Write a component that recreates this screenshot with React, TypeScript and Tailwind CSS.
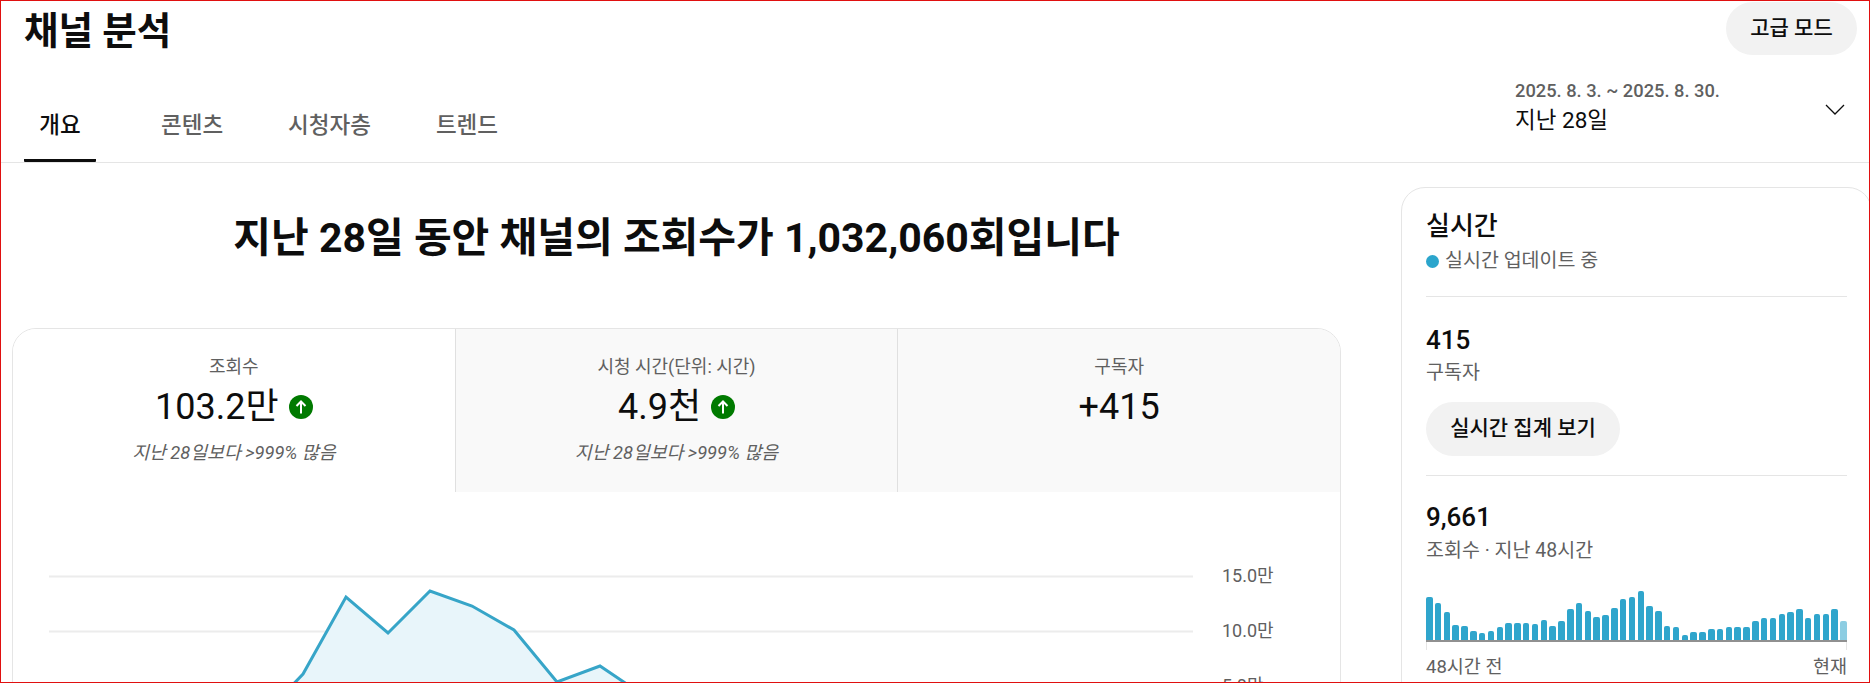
import React from "react";

const font = "[font-family:Roboto,'Noto_Sans_CJK_KR',sans-serif]";

const tabs = ["콘텐츠", "시청자층", "트렌드"];

// bar heights read off the 48 hour chart
const bars: number[] = [
  43, 37, 28, 15, 14, 9, 7, 9, 13, 17, 17, 17, 16, 20, 14, 19, 31, 37, 29, 23, 25, 32, 41, 43,
  49, 34, 29, 14, 13, 5, 8, 8, 11, 11, 13, 13, 13, 19, 22, 22, 26, 28, 31, 22, 26, 26, 31, 19,
];

const UpIcon = () => (
  <svg width="24" height="24" viewBox="0 0 24 24" className="shrink-0">
    <circle cx="12" cy="12" r="12" fill="#007a00" />
    <path d="M12 18.5V6.5M7.5 11l4.5-4.5 4.5 4.5" fill="none" stroke="#fff" strokeWidth="2" />
  </svg>
);

const Metric = ({ label, value, note, up, active }: { label: string; value: string; note?: string; up?: boolean; active?: boolean }) => (
  <div className={`flex-1 flex flex-col items-center pt-[27px] ${active ? "bg-white" : "bg-[#f9f9f9] border-l border-[#e0e0e0]"}`}>
    <div className="text-[18px] leading-[22px] text-[#606060]">{label}</div>
    <div className="flex items-center gap-[10px] mt-[7px] h-[44px]">
      <span className="text-[36px] leading-[44px] text-[#0d0d0d]">{value}</span>
      {up && <UpIcon />}
    </div>
    {note && <div className="mt-[13px] text-[18.3px] leading-[22px] italic text-[#606060]">{note}</div>}
  </div>
);

const Chart = () => (
  <svg width="1329" height="200" className="block">
    <line x1="36" x2="1180" y1="84.5" y2="84.5" stroke="#ececec" strokeWidth="2" />
    <line x1="36" x2="1180" y1="139.5" y2="139.5" stroke="#ececec" strokeWidth="2" />
    <path d="M270 203L290 182L333 105L375 141L417 99L459 114L501 138L544 190L587 174L630 203Z" fill="#e8f5fa" />
    <path d="M270 203L290 182L333 105L375 141L417 99L459 114L501 138L544 190L587 174L630 203" fill="none" stroke="#37a5c8" strokeWidth="3" />
    <g fontSize="18" fill="#606060" fontFamily="Roboto, 'Noto Sans CJK KR', sans-serif">
      <text x="1209" y="90">15.0만</text>
      <text x="1209" y="145">10.0만</text>
      <text x="1209" y="200">5.0만</text>
    </g>
  </svg>
);

export default function App() {
  return (
    <div className={`h-[683px] overflow-hidden border border-[#e01010] bg-white ${font}`}>
      <header className="h-[162px] border-b border-[#e5e5e5] relative">
        <div className="flex justify-between pl-[23px] pr-[12px] pt-[1px]">
          <h1 className="mt-[3px] text-[37.5px] leading-[53px] font-bold text-[#0d0d0d]">채널 분석</h1>
          <button className="w-[131px] h-[53px] rounded-full bg-[#f2f2f2] text-[21px] font-medium text-[#0d0d0d]">고급 모드</button>
        </div>
        <div className="flex justify-between pl-[23px] pr-[24px] mt-[19px]">
          <nav className="flex gap-[65px] mt-[12px]">
            <div className="w-[72px] h-[73px] border-b-[3px] border-[#0d0d0d] flex justify-center pt-[20px] text-[22.5px] font-medium text-[#0d0d0d] rounded-[1px]">개요</div>
            {tabs.map((t) => (
              <div key={t} className="pt-[20px] text-[22.5px] font-medium text-[#606060]">{t}</div>
            ))}
          </nav>
          <div className="flex w-[330px] justify-between pt-[3px]">
            <div>
              <div className="text-[18.3px] leading-[22px] font-medium text-[#606060]">2025. 8. 3. ~ 2025. 8. 30.</div>
              <div className="text-[22.5px] leading-[30px] text-[#0d0d0d] mt-[3px]">지난 28일</div>
            </div>
            <svg width="20" height="11" viewBox="0 0 20 11" className="mt-[24px]">
              <path d="M1 1l9 9 9-9" fill="none" stroke="#0d0d0d" strokeWidth="1.3" />
            </svg>
          </div>
        </div>
      </header>

      <main className="flex">
        <div className="w-[1329px] ml-[11px] shrink-0">
          <h2 className="mt-[47px] h-[56px] text-center text-[41px] leading-[56px] font-bold text-[#0d0d0d]">지난 28일 동안 채널의 조회수가 1,032,060회입니다</h2>
          <section className="mt-[62px] h-[400px] rounded-t-[24px] border border-[#e5e5e5] overflow-hidden">
            <div className="flex h-[163px]">
              <Metric active label="조회수" value="103.2만" note="지난 28일보다 >999% 많음" up />
              <Metric label="시청 시간(단위: 시간)" value="4.9천" note="지난 28일보다 >999% 많음" up />
              <Metric label="구독자" value="+415" />
            </div>
            <Chart />
          </section>
        </div>

        <aside className="ml-[60px] mt-[24px] flex-1 h-[600px] rounded-t-[24px] border border-[#e5e5e5] px-[24px] pt-[23px]">
          <div className="w-[421px]">
            <div className="text-[26px] leading-[30px] font-medium text-[#0d0d0d]">실시간</div>
            <div className="flex items-center gap-[6px] mt-[7px] text-[19.5px] leading-[26px] text-[#606060]">
              <span className="w-[13px] h-[13px] rounded-full bg-[#2ba5cc]" />
              실시간 업데이트 중
            </div>
            <div className="mt-[22px] border-t border-[#e5e5e5]" />
            <div className="mt-[28px] text-[26px] leading-[30px] font-medium text-[#0d0d0d]">415</div>
            <div className="mt-[5px] text-[19.5px] leading-[26px] text-[#606060]">구독자</div>
            <button className="mt-[16px] block w-[194px] h-[54px] rounded-full bg-[#f2f2f2] text-[21px] font-medium text-[#0d0d0d]">실시간 집계 보기</button>
            <div className="mt-[19px] border-t border-[#e5e5e5]" />
            <div className="mt-[26px] text-[26px] leading-[30px] font-medium text-[#0d0d0d]">9,661</div>
            <div className="mt-[6px] text-[19.5px] leading-[26px] text-[#606060]">조회수 · 지난 48시간</div>
            <div className="mt-[28px] h-[50px] flex items-end justify-between border-b-2 border-[#909090]">
              {bars.map((h, i) => (
                <div
                  key={i}
                  className={`w-[6.5px] rounded-t-[2px] ${i === bars.length - 1 ? "bg-[#8ccde2]" : "bg-[#2fa5cc]"}`}
                  style={{ height: h }}
                />
              ))}
            </div>
            <div className="h-[8px] border-x border-[#e5e5e5]" />
            <div className="flex justify-between mt-[4px] text-[18.5px] leading-[26px] text-[#606060]">
              <span>48시간 전</span>
              <span>현재</span>
            </div>
          </div>
        </aside>
      </main>
    </div>
  );
}
